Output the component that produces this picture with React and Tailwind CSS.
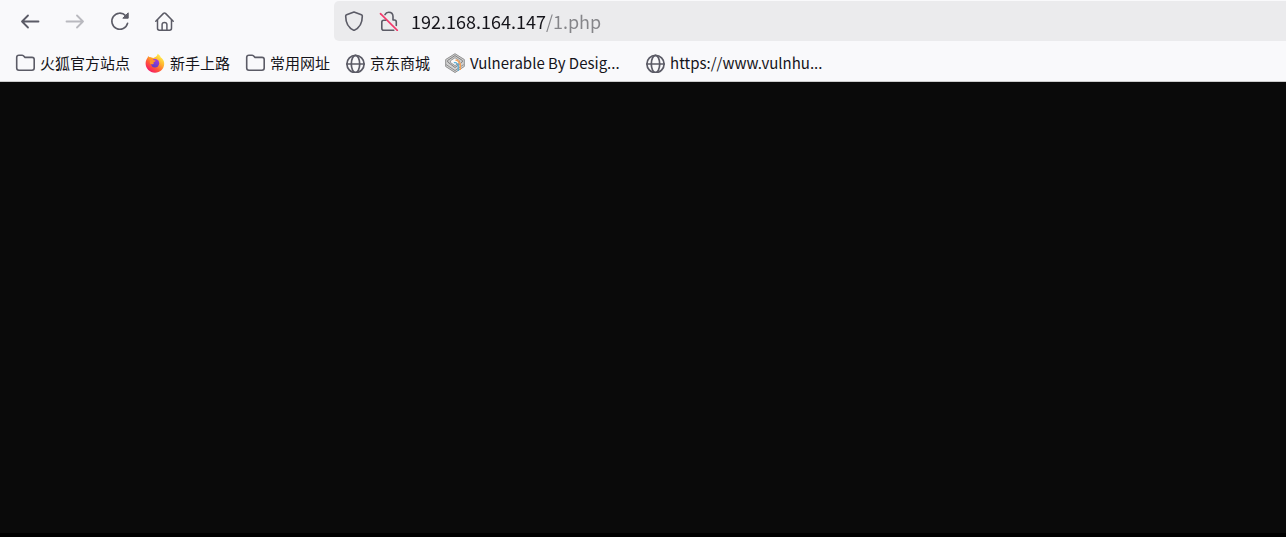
import React, { useState } from 'react';

const iconProps = {
  width: 20,
  height: 20,
  viewBox: '0 0 20 20',
  fill: 'none',
  stroke: 'currentColor',
  strokeWidth: 1.6,
  strokeLinecap: 'round',
  strokeLinejoin: 'round',
  'aria-hidden': true,
};

const BackIcon = () => (
  <svg {...iconProps} strokeWidth="1.8">
    <path d="M18.5 10.5H2M8 4.5L2 10.5L8 16.5" />
  </svg>
);

const ForwardIcon = () => (
  <svg {...iconProps} strokeWidth="1.8">
    <path d="M1.5 10.5H18M12 4.5L18 10.5L12 16.5" />
  </svg>
);

const ReloadIcon = () => (
  <svg {...iconProps}>
    <path d="M17.6 12.2A8 8 0 1 1 15.6 4.6" />
    <path d="M18.2 2.2V7.2H13.2Z" fill="currentColor" strokeWidth="1" />
  </svg>
);

const HomeIcon = () => (
  <svg {...iconProps} strokeWidth="1.5">
    <path d="M0.8 10.2L8.5 2.4Q9.5 1.6 10.5 2.4L18.2 10.2" />
    <path d="M2.5 9V17.3Q2.5 19.2 4.4 19.2H14.6Q16.5 19.2 16.5 17.3V9" />
    <path d="M7.1 19V13.6Q7.1 11.4 9.5 11.4Q11.9 11.4 11.9 13.6V19" />
  </svg>
);

const ShieldIcon = () => (
  <svg {...iconProps}>
    <path d="M10 1L17.4 3.8Q18.4 4.2 18.3 5.3C18.3 12 15.5 17 10 19.4C4.5 17 1.7 12 1.7 5.3Q1.6 4.2 2.6 3.8Z" />
  </svg>
);

const InsecureIcon = () => (
  <svg {...iconProps}>
    <path d="M6 3.6C6.8 1.9 8.2 1.2 9.7 1.2C12.4 1.2 14 3.1 14 5.6V9H15.3Q17.3 9 17.3 11V14.5" />
    <path d="M7 9.2H4.8Q2.8 9.2 2.8 11.2V17.2Q2.8 19.2 4.8 19.2H14.8" />
    <path d="M1.5 2.6L18.3 19.4" stroke="#f3396b" strokeWidth="1.6" />
  </svg>
);

const FolderIcon = () => (
  <svg {...iconProps}>
    <path d="M1.7 4.4Q1.7 2.2 3.9 2.2H7Q7.8 2.2 8.4 2.8L10 4.4H17Q19.2 4.4 19.2 6.6V15Q19.2 17.2 17 17.2H3.9Q1.7 17.2 1.7 15Z" />
  </svg>
);

const GlobeIcon = () => (
  <svg {...iconProps} strokeWidth="1.7">
    <circle cx="10.5" cy="11" r="8.6" />
    <ellipse cx="10.5" cy="11" rx="4.2" ry="8.6" />
    <path d="M1.9 11H19.1" />
  </svg>
);

const FirefoxIcon = () => (
  <svg width="20" height="20" viewBox="0 0 20 20" aria-hidden="true">
    <defs>
      <linearGradient id="flame" x1="0.85" y1="0.1" x2="0.2" y2="0.95">
        <stop offset="0" stopColor="#fff44f" />
        <stop offset="0.35" stopColor="#ffb02e" />
        <stop offset="0.65" stopColor="#ff5a36" />
        <stop offset="1" stopColor="#f5156c" />
      </linearGradient>
      <linearGradient id="globe" x1="0.7" y1="0" x2="0.3" y2="1">
        <stop offset="0" stopColor="#a53be0" />
        <stop offset="1" stopColor="#5b3fc4" />
      </linearGradient>
    </defs>
    <path
      d="M12.7 0.8C14.5 2 15.3 3.2 15.8 4.5C16.4 4.7 17 5.2 17.3 5.8C18.8 7.5 19.3 9.3 19.2 11C19 16 15 19.7 10 19.7C4.7 19.7 0.6 15.5 0.6 10.5C0.6 8 1.5 6 2.7 4.5L3.1 3.1L4.3 4.3L6.2 4.4L8.5 5C10.3 4.3 12.5 3 12.7 0.8Z"
      fill="url(#flame)"
    />
    <circle cx="10" cy="10.3" r="4.2" fill="url(#globe)" />
    <path d="M3 4.5C4.5 4.1 6.2 4.4 7.5 5.6L8 7.1L10.6 7.4C10.5 8.6 9 8.8 8.5 9.4C8.2 10 8.5 10.4 9 10.7C7.5 11.5 6.2 11.5 5.2 10.8C4.5 9.5 4.8 8.3 5.3 7.5Z" fill="#ff9526" />
  </svg>
);

const VulnhubIcon = () => (
  <svg width="20" height="20" viewBox="0 0 20 20" fill="none" strokeLinejoin="round" aria-hidden="true">
    <path d="M10 0.7L19.3 6.5V13.5L10 19.5L0.7 13.5V6.5Z" fill="#d2d2d2" stroke="#858585" strokeWidth="0.9" />
    <path d="M10 2.6L17.3 7.4V9L10 14.5L2.7 9V7.4Z" stroke="#7f7f7f" strokeWidth="1" />
    <path d="M1.2 11.6L10 17.6L18.5 11.6" stroke="#858585" strokeWidth="0.9" />
    <path d="M10 4.7L14.6 7.8V9.5L10 12.6L5.4 9.5V7.8Z" fill="#fafafa" stroke="#8c8c8c" strokeWidth="0.9" />
    <path d="M10.5 7.2H12.3L15.3 10.8V17" stroke="#f5a35a" strokeWidth="1.4" />
    <path d="M8.8 9.6H11L13.3 12.5V18" stroke="#62b0d4" strokeWidth="1.3" />
  </svg>
);

const navButtons = [
  { label: 'Back', Icon: BackIcon },
  { label: 'Forward', Icon: ForwardIcon, disabled: true },
  { label: 'Reload', Icon: ReloadIcon },
  { label: 'Home', Icon: HomeIcon },
];

const bookmarks = [
  { title: '火狐官方站点', Icon: FolderIcon, folder: true },
  { title: '新手上路', Icon: FirefoxIcon },
  { title: '常用网址', Icon: FolderIcon, folder: true },
  { title: '京东商城', Icon: GlobeIcon },
  { title: 'Vulnerable By Desig...', Icon: VulnhubIcon, wide: true },
  { title: 'https://www.vulnhu...', Icon: GlobeIcon, wide: true },
];

const Toolbar = () => {
  const [url, setUrl] = useState('192.168.164.147/1.php');

  return (
    <div className="flex items-center pt-px pl-5">
      <nav className="flex shrink-0 gap-[25px] text-[#5b5b66]">
        {navButtons.map(({ label, Icon, disabled }) => (
          <button key={label} type="button" aria-label={label} disabled={disabled} className="disabled:opacity-40">
            <Icon />
          </button>
        ))}
      </nav>
      <div className="ml-[159px] flex h-10 min-w-0 flex-1 items-center rounded-l-[5px] bg-[#ebebed] pl-[10px] text-[#5b5b66]">
        <button type="button" aria-label="Tracking protection" className="shrink-0">
          <ShieldIcon />
        </button>
        <button type="button" aria-label="Connection not secure" className="ml-[15px] shrink-0">
          <InsecureIcon />
        </button>
        {/* host is dark, path is grey */}
        <input
          type="text"
          aria-label="Address"
          value={url}
          spellCheck={false}
          onChange={(e) => setUrl(e.target.value)}
          className="ml-3 min-w-0 flex-1 bg-[linear-gradient(to_right,#15141a_135px,#858589_135px)] bg-clip-text text-[18px] leading-6 text-transparent caret-black outline-none"
        />
      </div>
    </div>
  );
};

const BookmarksBar = () => (
  <div className="flex items-center gap-[15px] border-b border-[#cccccc] pt-3 pb-2 pl-[15px] text-[15px] leading-5 text-[#15141a]">
    {bookmarks.map(({ title, Icon, folder, wide }) => {
      const content = (
        <>
          <span className="text-[#5b5b66]"><Icon /></span>
          <span className={wide ? 'min-w-[160px] whitespace-nowrap' : 'whitespace-nowrap'}>{title}</span>
        </>
      );
      return folder ? (
        <button key={title} type="button" className="flex shrink-0 items-center gap-[5px]">{content}</button>
      ) : (
        <a key={title} href="#" className="flex shrink-0 items-center gap-[5px]">{content}</a>
      );
    })}
  </div>
);

const App = () => {
  return (
    <div className="flex min-h-screen flex-col bg-[#f9f9fb] font-['Noto_Sans_CJK_SC',sans-serif]">
      <header>
        <Toolbar />
        <BookmarksBar />
      </header>
      <main className="flex-1 border-b-4 border-black bg-[#0a0a0a]" />
    </div>
  );
};

export default App;
